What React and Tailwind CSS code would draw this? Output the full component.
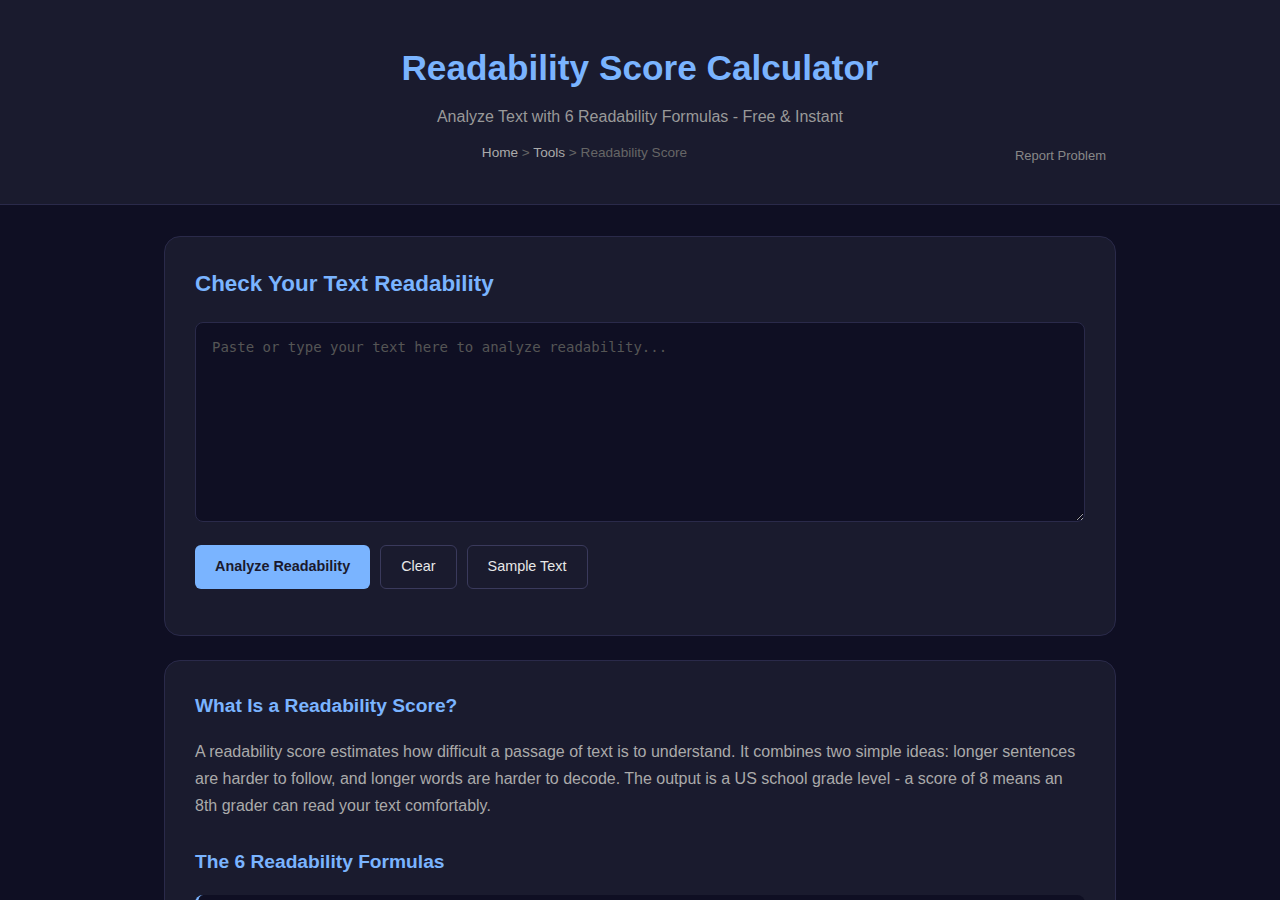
import { useState } from 'react';

const SAMPLE = 'The quick brown fox jumps over the lazy dog. Reading should be easy and clear for everyone.';

export default function App() {
  const [text, setText] = useState('');

  return (
    <div className="min-h-screen bg-[#0f0f23] font-['Liberation_Sans',Arial,sans-serif]">
      {/* Header */}
      <header className="bg-[#1a1b2e] border-b border-[#2a2a4a] pt-[44px] pb-[39px] text-center">
        <h1 className="text-[35.2px] leading-[48px] font-bold text-[#7ab4ff]">Readability Score Calculator</h1>
        <p className="mt-[15px] text-[16px] leading-[20px] text-[#999]">
          Analyze Text with 6 Readability Formulas - Free &amp; Instant
        </p>
        <div className="w-[972px] mx-auto pr-[20px] mt-[17px] flex items-start">
          <nav className="flex-1 text-center text-[13.6px] leading-[18px] text-[#666]">
            <a href="#" className="text-[#aaa]">Home</a> &gt; <a href="#" className="text-[#aaa]">Tools</a> &gt; Readability Score
          </nav>
          <a href="#" className="text-[13px] leading-[18px] mt-[3px] text-[#888]">Report Problem</a>
        </div>
      </header>

      <main className="w-[952px] mx-auto pt-[31px] pb-10 space-y-[24px]">
        {/* Tool */}
        <section className="bg-[#1a1b2e] border border-[#2a2a4a] rounded-[16px] px-[30px] pt-[32px] pb-[46px]">
          <h2 className="text-[22.4px] leading-[30px] font-bold text-[#7ab4ff]">Check Your Text Readability</h2>
          <textarea
            value={text}
            onChange={e => setText(e.target.value)}
            placeholder="Paste or type your text here to analyze readability..."
            className="mt-[23px] block w-full h-[200px] bg-[#0f0f23] border border-[#2a2a4a] rounded-[8px] px-[16px] py-[14px] text-[14px] leading-[20px] text-[#ddd] placeholder:text-[#555] font-['DejaVu_Sans_Mono',monospace] focus:outline-none"
          />
          <div className="mt-[23px] flex gap-[10px]">
            <button className="h-[44px] px-[20px] rounded-[6px] bg-[#7ab4ff] text-[#1a1a2e] text-[14.4px] font-bold">
              Analyze Readability
            </button>
            <button
              onClick={() => setText('')}
              className="h-[44px] px-[20px] rounded-[6px] border border-[#3a3a5c] bg-[#1a1b2e] text-[#e8e8e8] text-[14.4px]"
            >
              Clear
            </button>
            <button
              onClick={() => setText(SAMPLE)}
              className="h-[44px] px-[20px] rounded-[6px] border border-[#3a3a5c] bg-[#1a1b2e] text-[#e8e8e8] text-[14.4px]"
            >
              Sample Text
            </button>
          </div>
        </section>

        {/* Info */}
        <section className="bg-[#1a1b2e] border border-[#2a2a4a] rounded-[16px] px-[30px] pt-[32px] pb-[30px]">
          <h3 className="text-[19.2px] leading-[26px] font-bold text-[#7ab4ff]">What Is a Readability Score?</h3>
          <p className="mt-[19px] text-[16px] leading-[27px] text-[#aaa]">
            A readability score estimates how difficult a passage of text is to understand. It combines two simple ideas: longer sentences are harder to follow, and longer words are harder to decode. The output is a US school grade level - a score of 8 means an 8th grader can read your text comfortably.
          </p>
          <h3 className="mt-[30px] text-[19.2px] leading-[26px] font-bold text-[#7ab4ff]">The 6 Readability Formulas</h3>
          <div className="mt-[20px] bg-[#0f0f23] border-l-[3px] border-[#7ab4ff] rounded-[8px] p-[16px] h-[120px]" />
        </section>
      </main>
    </div>
  );
}
